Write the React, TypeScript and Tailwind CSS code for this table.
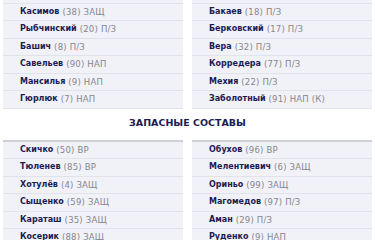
const starters = {
  left: [
    { name: "Касимов", num: 38, pos: "ЗАЩ" },
    { name: "Рыбчинский", num: 20, pos: "П/З" },
    { name: "Башич", num: 8, pos: "П/З" },
    { name: "Савельев", num: 90, pos: "НАП" },
    { name: "Мансилья", num: 9, pos: "НАП" },
    { name: "Гюрлюк", num: 7, pos: "НАП" },
  ],
  right: [
    { name: "Бакаев", num: 18, pos: "П/З" },
    { name: "Берковский", num: 17, pos: "П/З" },
    { name: "Вера", num: 32, pos: "П/З" },
    { name: "Корредера", num: 77, pos: "П/З" },
    { name: "Мехия", num: 22, pos: "П/З" },
    { name: "Заболотный", num: 91, pos: "НАП (К)" },
  ],
};

const subs = {
  left: [
    { name: "Скичко", num: 50, pos: "ВР" },
    { name: "Тюленев", num: 85, pos: "ВР" },
    { name: "Хотулёв", num: 4, pos: "ЗАЩ" },
    { name: "Сыщенко", num: 59, pos: "ЗАЩ" },
    { name: "Караташ", num: 35, pos: "ЗАЩ" },
    { name: "Косерик", num: 88, pos: "ЗАЩ" },
  ],
  right: [
    { name: "Обухов", num: 96, pos: "ВР" },
    { name: "Мелентиевич", num: 6, pos: "ЗАЩ" },
    { name: "Ориньо", num: 99, pos: "ЗАЩ" },
    { name: "Магомедов", num: 97, pos: "П/З" },
    { name: "Аман", num: 29, pos: "П/З" },
    { name: "Руденко", num: 9, pos: "НАП" },
  ],
};

type Player = { name: string; num: number; pos: string };

const Row = ({ p }: { p: Player }) => (
  <div className="flex h-[17.5px] items-center border-b border-[#e1e2ea] bg-[#f1f2f7] pl-[17px] leading-none">
    <span className="text-[8px] font-bold text-[#1c1b52]">{p.name}</span>
    <span className="ml-[3px] text-[8.5px] tracking-[0.2px] text-[#85858f]">
      ({p.num}) {p.pos}
    </span>
  </div>
);

const Column = ({ players, top }: { players: Player[]; top?: boolean }) => (
  <div className={top ? "flex flex-col" : "flex flex-col border-t-2 border-[#cfd0d6]"}>
    {top && <div className="h-[3.5px] border-b border-[#e1e2ea] bg-[#f1f2f7]" />}
    {players.map((p) => (
      <Row key={p.name} p={p} />
    ))}
  </div>
);

export default function App() {
  return (
    <div
      className="h-[240px] w-[375px] overflow-hidden bg-white px-[3px]"
      style={{ fontFamily: '"DejaVu Sans", sans-serif' }}
    >
      <div className="grid grid-cols-2 gap-x-[9px]">
        <Column players={starters.left} top />
        <Column players={starters.right} top />
      </div>
      <div className="flex h-[31px] items-center justify-center pb-[1px] text-[9.5px] font-bold uppercase text-[#1c1b52]">
        Запасные составы
      </div>
      <div className="grid grid-cols-2 gap-x-[9px]">
        <Column players={subs.left} />
        <Column players={subs.right} />
      </div>
    </div>
  );
}
